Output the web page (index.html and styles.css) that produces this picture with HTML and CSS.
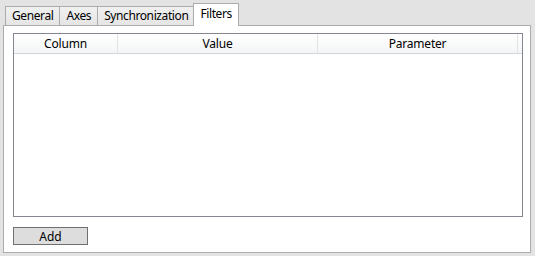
FILE: index.html
```html
<!DOCTYPE html>
<html lang="en">
<head>
    <meta charset="UTF-8">
    <title>Filters</title>
    <link rel="stylesheet" href="styles.css">
</head>
<body>
    <div class="window">
        <div class="tabs">
            <div class="tab">General</div>
            <div class="tab">Axes</div>
            <div class="tab">Synchronization</div>
            <div class="tab selected">Filters</div>
        </div>

        <div class="panel">
            <div class="list">
                <div class="header">
                    <div class="col col-column">Column</div>
                    <div class="col col-value">Value</div>
                    <div class="col col-param">Parameter</div>
                    <div class="col col-fill"></div>
                </div>
            </div>
            <button class="btn">Add</button>
        </div>
    </div>
</body>
</html>
```

FILE: styles.css
```css
body {
    margin: 0;
    background-color: #e3e3e3;
    font-family: 'Noto Sans', 'Open Sans', sans-serif;
    font-size: 12px;
    color: #000;
}
.window {
    padding: 3px 4px 3px 3px;
}
.tabs {
    display: flex;
    align-items: flex-end;
    height: 22px;
    padding-left: 2px;
}
.tab {
    height: 18px;
    line-height: 17px;
    padding: 0 6px;
    border: 1px solid #acacac;
    border-bottom: none;
    background: linear-gradient(#f0f0f0, #e5e5e5);
    margin-right: -1px;
    letter-spacing: -0.4px;
}
.tab.selected {
    position: relative;
    z-index: 1;
    height: 22px;
    line-height: 20px;
    margin: 0 0 -1px -1px;
    padding: 0 6px;
    background: #fff;
}
.panel {
    height: 212px;
    padding: 7px 7px 7px 9px;
    border: 1px solid #acacac;
    background-color: #fff;
}
.list {
    height: 182px;
    border: 1px solid #828790;
    background-color: #fff;
}
.header {
    display: flex;
    height: 19px;
    border-bottom: 1px solid #d5d5d5;
    background: linear-gradient(#fff, #f4f5f6);
}
.col {
    border-right: 1px solid #e2e3e5;
    text-align: center;
    line-height: 20px;
    letter-spacing: -0.2px;
}
.col-column {
    width: 103px;
}
.col-value,
.col-param {
    width: 199px;
}
.col-fill {
    flex: 1;
    border-right: none;
}
.btn {
    display: block;
    width: 75px;
    height: 18px;
    margin-top: 10px;
    padding: 0;
    border: 1px solid #707070;
    background-color: #dddddd;
    font-family: inherit;
    font-size: 12px;
    line-height: 15px;
    color: #000;
}
```
